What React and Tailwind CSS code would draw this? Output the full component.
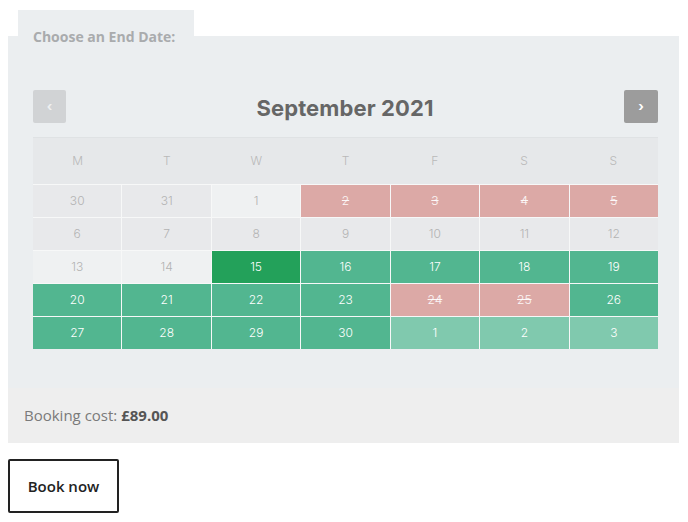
const weeks = [
  [
    { d: 30, t: 'off' },
    { d: 31, t: 'off' },
    { d: 1, t: 'past' },
    { d: 2, t: 'booked' },
    { d: 3, t: 'booked' },
    { d: 4, t: 'booked' },
    { d: 5, t: 'booked' },
  ],
  [
    { d: 6, t: 'off' },
    { d: 7, t: 'off' },
    { d: 8, t: 'off' },
    { d: 9, t: 'off' },
    { d: 10, t: 'off' },
    { d: 11, t: 'off' },
    { d: 12, t: 'off' },
  ],
  [
    { d: 13, t: 'past' },
    { d: 14, t: 'past' },
    { d: 15, t: 'selected' },
    { d: 16, t: 'free' },
    { d: 17, t: 'free' },
    { d: 18, t: 'free' },
    { d: 19, t: 'free' },
  ],
  [
    { d: 20, t: 'free' },
    { d: 21, t: 'free' },
    { d: 22, t: 'free' },
    { d: 23, t: 'free' },
    { d: 24, t: 'booked' },
    { d: 25, t: 'booked' },
    { d: 26, t: 'free' },
  ],
  [
    { d: 27, t: 'free' },
    { d: 28, t: 'free' },
    { d: 29, t: 'free' },
    { d: 30, t: 'free' },
    { d: 1, t: 'next' },
    { d: 2, t: 'next' },
    { d: 3, t: 'next' },
  ],
];

const cellStyles = {
  off: 'bg-[#e8e9eb] text-[#b3b3b3]',
  past: 'bg-[#eff1f2] text-[#b3b3b3]',
  booked: 'bg-[#dca9a6] text-white/90 line-through',
  selected: 'bg-[#23a15a] text-white',
  free: 'bg-[#52b690] text-white',
  next: 'bg-[#80c9ae] text-white',
};

const days = ['M', 'T', 'W', 'T', 'F', 'S', 'S'];

export default function App() {
  return (
    <div className="w-[688px] h-[522px] bg-white pt-[10px]" style={{ fontFamily: 'Inter, "Noto Sans", sans-serif' }}>
      {/* Tab */}
      <div className="ml-[18px] w-[176px] h-[26px] bg-[#ebeef0] pt-[18px] pl-[15px]">
        <span className="block leading-[18px] text-[14px] font-bold text-[#a9abad] whitespace-nowrap" style={{ fontFamily: '"Open Sans", sans-serif' }}>
          Choose an End Date:
        </span>
      </div>

      {/* Calendar panel */}
      <div className="mx-[8px] w-[671px] bg-[#ebeef0] pl-[25px] pr-[21px] pt-[54px] pb-[39px]">
        <div className="flex items-center justify-between h-[33px]">
          <button className="w-[33px] h-[33px] rounded-[2px] bg-[#d1d3d5] text-[#eef0f1] text-[13px] font-bold leading-none flex items-center justify-center">
            ‹
          </button>
          <h2 className="pt-[3px] text-[22px] font-bold text-[#666666] tracking-[0.1px]">September 2021</h2>
          <button className="w-[34px] h-[33px] rounded-[2px] bg-[#9c9c9c] text-white text-[13px] font-bold leading-none flex items-center justify-center">
            ›
          </button>
        </div>

        <div className="mt-[14px] w-[625px] border-t border-[#dfe2e4]">
          <div className="grid grid-cols-7 h-[46px] bg-[#e6e8ea]">
            {days.map((d, i) => (
              <div key={i} className="flex items-center justify-center text-[12px] font-light text-[#b9b9b9]">
                {d}
              </div>
            ))}
          </div>
          <div className="grid grid-cols-7 gap-px bg-[#f7f8f8] border-t border-[#f7f8f8]">
            {weeks.flat().map((c, i) => (
              <div key={i} className={`h-[32px] flex items-center justify-center text-[12px] font-light ${cellStyles[c.t]}`}>
                {c.d}
              </div>
            ))}
          </div>
        </div>
      </div>

      {/* Cost */}
      <div className="mx-[8px] w-[671px] h-[55px] bg-[#eeeeee] pl-[16px] flex items-center text-[15px] text-[#7a7a7a]" style={{ fontFamily: '"Open Sans", sans-serif' }}>
        Booking cost:&nbsp;<span className="font-bold text-[#555555]">£89.00</span>
      </div>

      <button
        className="mt-[16px] ml-[8px] w-[111px] h-[54px] border-2 border-[#222222] rounded-[2px] bg-white text-[15px] font-semibold text-[#222222]"
        style={{ fontFamily: '"Open Sans", sans-serif' }}
      >
        Book now
      </button>
    </div>
  );
}
